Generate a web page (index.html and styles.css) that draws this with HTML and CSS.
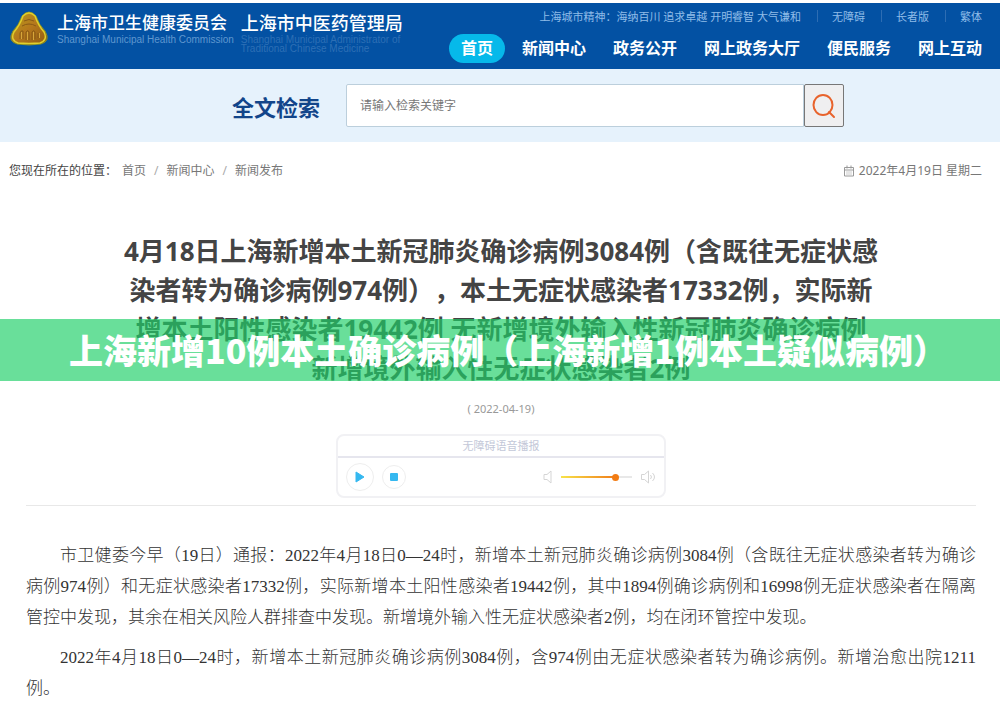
FILE: index.html
```html
<!DOCTYPE html>
<html lang="zh-CN">

<head>
  <meta charset="UTF-8">
  <meta name="viewport" content="width=device-width, initial-scale=1.0">
  <title>上海市卫生健康委员会</title>
  <link rel="stylesheet" href="styles.css">
</head>

<body>
  <header class="header">
    <div class="brand">
      <svg class="emblem" viewBox="0 0 40 36" width="40" height="36" aria-hidden="true">
        <defs>
          <linearGradient id="gold" x1="0" y1="0" x2="1" y2="1">
            <stop offset="0" stop-color="#b8a01c"/>
            <stop offset="0.5" stop-color="#b5781c"/>
            <stop offset="1" stop-color="#8f5a12"/>
          </linearGradient>
        </defs>
        <path d="M13 6Q20-2 27 6Q30 15 36 21Q42 31 32 34Q20 36 8 34Q-2 31 4 21Q10 15 13 6Z" fill="url(#gold)" stroke="#7d8f2a" stroke-width="1"/>
        <path d="M14 6Q20 0 26 6Q29 15 35 22Q39 30 31 33Q20 34 9 33Q1 30 5 22Q11 15 14 6Z" fill="none" stroke="#e0cf2c" stroke-width="1.5"/>
        <path d="M11 29v-6q1-3 3-2v8M17 30v-8q2-3 3 0v8M23 30v-8q2-3 3 0v7M29 28v-5M13 16q7-4 14 0M15 11q5-3 10 0" fill="none" stroke="#8a5a16" stroke-width="1"/>
        <path d="M12.500 29v-7M18.500 30v-8M24.500 30v-8M30.500 28v-5" stroke="#d7a63a" stroke-width="1"/>
      </svg>
      <div class="org">
        <p class="org-name">上海市卫生健康委员会</p>
        <p class="org-en">Shanghai Municipal Health Commission</p>
      </div>
      <div class="org org-second">
        <p class="org-name">上海市中医药管理局</p>
        <p class="org-en">Shanghai Municipal Administrator of<br>Traditional Chinese Medicine</p>
      </div>
    </div>
    <div class="header-right">
      <div class="top-links">
        <span class="motto">上海城市精神：海纳百川 追求卓越 开明睿智 大气谦和</span>
        <a href="#">无障碍</a>
        <a href="#">长者版</a>
        <a href="#">繁体</a>
      </div>
      <nav class="nav">
        <a class="active" href="#">首页</a>
        <a href="#">新闻中心</a>
        <a href="#">政务公开</a>
        <a href="#">网上政务大厅</a>
        <a href="#">便民服务</a>
        <a href="#">网上互动</a>
      </nav>
    </div>
  </header>

  <form class="search">
    <label for="keyword">全文检索</label>
    <div class="search-box">
      <input type="text" id="keyword" placeholder="请输入检索关键字">
      <button type="button" aria-label="检索">
        <svg viewBox="0 0 24 26" width="24" height="26" fill="none" stroke="#e8632c" stroke-width="2" stroke-linecap="round">
          <ellipse cx="11" cy="12" rx="9.5" ry="10"/>
          <path d="M17 19l5 5"/>
        </svg>
      </button>
    </div>
  </form>

  <div class="location">
    <div class="crumbs">
      <span class="crumbs-label">您现在所在的位置：</span>
      <a href="#">首页</a>
      <span class="slash">/</span>
      <a href="#">新闻中心</a>
      <span class="slash">/</span>
      <a href="#">新闻发布</a>
    </div>
    <div class="date">
      <svg viewBox="0 0 12 12" width="12" height="12" fill="none" stroke="#999" aria-hidden="true">
        <path d="M1.500 2.500h9v8.500h-9zM1.500 5h9M4 .5v3M8 .5v3"/>
        <path d="M3.500 7h1M5.500 7h1M7.500 7h1M3.500 9h1M5.500 9h1M7.500 9h1"/>
      </svg>
      <span>2022年4月19日 星期二</span>
    </div>
  </div>

  <main class="article">
    <h1>4月18日上海新增本土新冠肺炎确诊病例3084例（含既往无症状感<br>染者转为确诊病例974例），本土无症状感染者17332例，实际新<br>增本土阳性感染者19442例 无新增境外输入性新冠肺炎确诊病例<br>新增境外输入性无症状感染者2例</h1>
    <p class="pub-date">( 2022-04-19)</p>

    <section class="player">
      <h2>无障碍语音播报</h2>
      <div class="controls">
        <button class="round" type="button" aria-label="播放">
          <svg viewBox="0 0 10 12" width="10" height="12"><path d="M1 1l8 5-8 5z" fill="#35b8f0" stroke="#35b8f0" stroke-linejoin="round"/></svg>
        </button>
        <button class="round small" type="button" aria-label="停止">
          <svg viewBox="0 0 10 10" width="10" height="10"><rect x="1" y="1" width="8" height="8" rx="1" fill="#35b8f0"/></svg>
        </button>
        <div class="volume">
          <svg viewBox="0 0 16 14" width="16" height="14" fill="none" stroke="#d5d5d5" aria-hidden="true">
            <path d="M7 4.500h3l4-3.500v12l-4-3.500H7z"/>
          </svg>
          <input type="range" min="0" max="100" value="80" aria-label="音量">
          <svg viewBox="0 0 16 14" width="16" height="14" fill="none" stroke="#d5d5d5" aria-hidden="true">
            <path d="M1.500 4.500h3l4-3.500v12l-4-3.500h-3zM10.500 5q2 2 0 4M12.500 3q4 4 0 8"/>
          </svg>
        </div>
      </div>
    </section>

    <div class="content">
      <p>市卫健委今早（19日）通报：2022年4月18日0—24时，新增本土新冠肺炎确诊病例3084例（含既往无症状感染者转为确诊病例974例）和无症状感染者17332例，实际新增本土阳性感染者19442例，其中1894例确诊病例和16998例无症状感染者在隔离管控中发现，其余在相关风险人群排查中发现。新增境外输入性无症状感染者2例，均在闭环管控中发现。</p>
      <p>2022年4月18日0—24时，新增本土新冠肺炎确诊病例3084例，含974例由无症状感染者转为确诊病例。新增治愈出院1211例。</p>
    </div>
  </main>

  <div class="banner">上海新增10例本土确诊病例（上海新增1例本土疑似病例）</div>
</body>

</html>
```
FILE: styles.css
```css
* {
  box-sizing: border-box;
}

body {
  position: relative;
  margin: 0;
  padding-top: 3px;
  background: #fff;
  color: #444;
  font-family: "Noto Sans", "Noto Sans CJK SC", sans-serif;
  font-size: 12px;
  text-spacing-trim: space-all;
}

h1,
h2,
p {
  margin: 0;
}

a {
  color: inherit;
  text-decoration: none;
}

.header {
  display: flex;
  justify-content: space-between;
  height: 66px;
  padding: 0 18px 0 9px;
  background: #0351a3;
  color: #fff;
  white-space: nowrap;
}

.brand {
  display: flex;
  padding-top: 7px;
}

.emblem {
  margin-right: 8px;
}

.org {
  padding-top: 1px;
}

.org-second {
  margin-left: 7px;
}

.org-name {
  font-size: 17px;
  font-weight: 500;
  line-height: 24px;
}

.org-en {
  color: #5f97cf;
  font-family: "Liberation Sans", Arial, sans-serif;
  font-size: 10px;
  line-height: 9px;
}

.org-second .org-name {
  font-size: 18px;
}

.org-second .org-en {
  color: #2d6fb5;
}

.header-right {
  display: flex;
  flex-direction: column;
  align-items: flex-end;
}

.top-links {
  display: flex;
  height: 26px;
  align-items: center;
  color: #8fbce8;
  font-size: 11px;
}

.top-links a {
  margin-left: 16px;
  padding-left: 15px;
  background: linear-gradient(#2d6db3, #2d6db3) no-repeat left center / 1px 12px;
}

.nav {
  display: flex;
  gap: 27px;
  align-items: center;
  margin-top: 5px;
  font-size: 16px;
  font-weight: 700;
  line-height: 29px;
}

.nav .active {
  margin-right: -10px;
  padding: 0 12px;
  border-radius: 15px;
  background: #06b9ea;
}

.search {
  display: flex;
  justify-content: center;
  align-items: center;
  gap: 26px;
  height: 73px;
  padding-left: 76px;
  background: #e6f2fc;
}

.search label {
  color: #12458a;
  font-size: 22px;
  font-weight: 700;
}

.search-box {
  display: flex;
  flex: 0 1 498px;
}

.search input {
  flex: 1;
  min-width: 0;
  height: 43px;
  padding: 0 13px;
  border: 1px solid #bccfdc;
  border-radius: 2px 0 0 2px;
  background: #fff;
  font: inherit;
}

.search input::placeholder {
  color: #777;
}

.search button {
  width: 40px;
  height: 43px;
  padding: 0;
  border: 1px solid #777;
  border-radius: 2px;
  background: #efeff0;
}

.search svg {
  display: block;
  margin: 0 auto;
}

.location {
  display: flex;
  justify-content: space-between;
  padding: 20px 18px 0 9px;
  color: #777;
  line-height: 18px;
}

.crumbs {
  display: flex;
  gap: 8px;
}

.crumbs-label {
  margin-right: -3px;
  color: #444;
}

.slash {
  color: #aaa;
}

.date {
  display: flex;
  align-items: center;
  gap: 4px;
}

.article {
  padding: 52px 24px 0 26px;
}

h1 {
  font-size: 26px;
  line-height: 39px;
  text-align: center;
}

.pub-date {
  margin-top: 12px;
  color: #999;
  font-size: 11px;
  line-height: 18px;
  text-align: center;
}

.player {
  width: 330px;
  margin: 16px auto 0;
  border: 2px solid #f1f1f4;
  border-radius: 8px;
}

.player h2 {
  border-bottom: 2px solid #e6e6ee;
  color: #c3c8d8;
  font-size: 11px;
  font-weight: 400;
  line-height: 20px;
  text-align: center;
}

.controls {
  display: flex;
  align-items: center;
  gap: 8px;
  height: 38px;
  padding: 0 8px;
}

.round {
  display: flex;
  justify-content: center;
  align-items: center;
  width: 28px;
  height: 28px;
  padding: 0;
  border: 1px solid #eee;
  border-radius: 50%;
  background: #fff;
}

.round.small {
  width: 24px;
  height: 24px;
}

.volume {
  display: flex;
  align-items: center;
  gap: 8px;
  margin-left: auto;
}

.volume input {
  width: 71px;
  height: 8px;
  margin: 0;
  appearance: none;
  background: linear-gradient(to right, #f8e34a, #f0801c 75%, #e8e8e8 75%) no-repeat center / 100% 2px;
}

.volume input::-webkit-slider-thumb {
  width: 7px;
  height: 7px;
  appearance: none;
  border-radius: 50%;
  background: #f27c14;
}

.content {
  margin-top: 7px;
  padding-top: 34px;
  border-top: 1px solid #e8e8e8;
  color: #333;
  font-family: "Liberation Serif", "Noto Sans CJK SC", serif;
  font-size: 17px;
  font-weight: 300;
  line-height: 31px;
}

.content p {
  margin-bottom: 9px;
  text-indent: 2em;
  text-align: justify;
}

/* title strip laid over the article heading */
.banner {
  position: absolute;
  top: 319px;
  left: 0;
  right: 0;
  padding-left: 16px;
  background: rgba(32, 208, 104, 0.67);
  color: #fff;
  font-family: "Noto Sans CJK SC", sans-serif;
  font-size: 34px;
  font-weight: 900;
  line-height: 62px;
  text-align: center;
  white-space: nowrap;
}
```
